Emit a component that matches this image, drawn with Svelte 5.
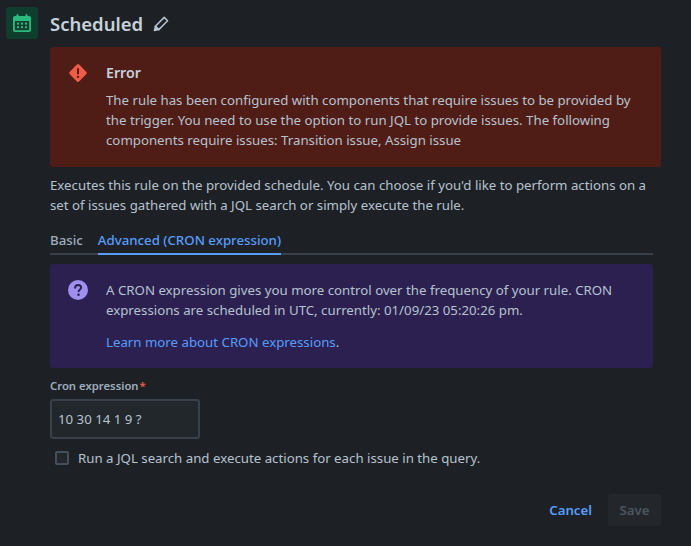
<script>
  const components = 'Transition issue, Assign issue';
</script>

<div class="page">
  <header class="head">
    <div class="tile">
      <svg width="20" height="20" viewBox="0 0 20 20" fill="none">
        <rect x="1" y="3" width="18" height="16" rx="2" fill="#2abb7f"/>
        <rect x="2.8" y="8" width="14.4" height="9.2" rx="0.5" fill="#123f2f"/>
        <rect x="4.5" y="1" width="2" height="4" rx="1" fill="#2abb7f"/>
        <rect x="13.5" y="1" width="2" height="4" rx="1" fill="#2abb7f"/>
        <g fill="#2abb7f">
          <rect x="5" y="9.6" width="2" height="2"/><rect x="9" y="9.6" width="2" height="2"/><rect x="13" y="9.6" width="2" height="2"/>
          <rect x="5" y="13.2" width="2" height="2"/><rect x="9" y="13.2" width="2" height="2"/><rect x="13" y="13.2" width="2" height="2"/>
        </g>
      </svg>
    </div>
    <h1>Scheduled</h1>
    <svg class="pencil" width="18" height="18" viewBox="0 0 18 18" fill="none" stroke="#b6c2cf" stroke-width="1.5" stroke-linejoin="round">
      <path d="M12.2 2.4l3.4 3.4-8.8 8.8-3.4-3.4z"/>
      <path d="M3.4 11.2l-1 4.4 4.4-1z" fill="#b6c2cf"/>
    </svg>
  </header>

  <div class="body">
    <section class="flag error">
      <svg class="ficon" width="20" height="20" viewBox="0 0 20 20">
        <path d="M8.9 1.6a1.6 1.6 0 0 1 2.2 0l7.3 7.3a1.6 1.6 0 0 1 0 2.2l-7.3 7.3a1.6 1.6 0 0 1-2.2 0l-7.3-7.3a1.6 1.6 0 0 1 0-2.2z" fill="#ef5c48"/>
        <rect x="9" y="5" width="2" height="6.4" rx="1" fill="#4f1c16"/>
        <circle cx="10" cy="13.9" r="1.15" fill="#4f1c16"/>
      </svg>
      <div class="ftext">
        <h2>Error</h2>
        <p>The rule has been configured with components that require issues to be provided by the trigger. You need to use the option to run JQL to provide issues. The following components require issues: {components}</p>
      </div>
    </section>

    <p class="desc">Executes this rule on the provided schedule. You can choose if you'd like to perform actions on a set of issues gathered with a JQL search or simply execute the rule.</p>

    <nav class="tabs">
      <span class="tab">Basic</span>
      <span class="tab active">Advanced (CRON expression)</span>
    </nav>

    <section class="flag info">
      <svg class="ficon" width="20" height="20" viewBox="0 0 20 20">
        <circle cx="10" cy="10" r="10" fill="#9f8fef"/>
        <path d="M7.1 7.8c0-1.7 1.3-2.8 3-2.8s3 1 3 2.6c0 1.3-.8 1.9-1.6 2.4-.6.4-.9.7-.9 1.3" fill="none" stroke="#2b2050" stroke-width="2" stroke-linecap="round"/>
        <circle cx="10.5" cy="14.7" r="1.25" fill="#2b2050"/>
      </svg>
      <div class="ftext">
        <p>A CRON expression gives you more control over the frequency of your rule. CRON expressions are scheduled in UTC, currently: 01/09/23 05:20:26 pm.</p>
        <p class="more"><a href="#top">Learn more about CRON expressions</a>.</p>
      </div>
    </section>

    <div class="field">
      <span class="label">Cron expression<span class="req">*</span></span>
      <div class="input">10 30 14 1 9 ?</div>
    </div>

    <label class="check">
      <span class="box"></span>
      <span>Run a JQL search and execute actions for each issue in the query.</span>
    </label>

    <footer class="actions">
      <span class="cancel">Cancel</span>
      <span class="save">Save</span>
    </footer>
  </div>
</div>

<style>
  :global(body) {
    margin: 0;
    background: #1d2125;
  }
  .page {
    width: 691px;
    height: 546px;
    overflow: hidden;
    box-sizing: border-box;
    padding-top: 7px;
    font-family: "Noto Sans", "Open Sans", sans-serif;
    font-size: 13.25px;
    line-height: 20px;
    color: #b6c2cf;
  }
  .head {
    display: flex;
    align-items: center;
    padding-left: 6px;
    height: 32px;
  }
  .tile {
    width: 32px;
    height: 32px;
    background: #0f3d2e;
    border-radius: 3px;
    display: flex;
    align-items: center;
    justify-content: center;
  }
  h1 {
    margin: 0 0 0 12px;
    padding-top: 2px;
    font-size: 18.5px;
    font-weight: 600;
    line-height: 30px;
    color: #c7d1db;
  }
  .pencil {
    margin: 2px 0 0 9px;
  }
  .body {
    margin-left: 50px;
    width: 611px;
  }
  .flag {
    display: flex;
    gap: 18px;
    box-sizing: border-box;
    border-radius: 3px;
    padding: 16px 18px;
  }
  .ficon {
    flex: none;
  }
  .error {
    margin-top: 8px;
    height: 120px;
    background: #501d16;
  }
  .ftext {
    flex: 1;
  }
  h2 {
    margin: 0 0 7px;
    font-size: 14.2px;
    font-weight: 600;
    line-height: 20px;
    color: #c7d1db;
  }
  p {
    margin: 0;
  }
  .flag p {
    color: #b6c2cf;
  }
  .desc {
    margin-top: 8px;
    width: 605px;
  }
  .tabs {
    display: flex;
    gap: 15px;
    margin-top: 15px;
    width: 603px;
    height: 25px;
    box-sizing: border-box;
    border-bottom: 2px solid #38414a;
    font-weight: 500;
  }
  .tab {
    height: 25px;
    box-sizing: border-box;
    color: #9fadbc;
  }
  .active {
    color: #579dff;
    border-bottom: 2px solid #579dff;
  }
  .info {
    margin-top: 9px;
    width: 603px;
    height: 104px;
    background: #2b2050;
  }
  .more {
    margin-top: 12px;
  }
  a {
    color: #579dff;
    text-decoration: none;
  }
  .field {
    margin-top: 10px;
  }
  .label {
    display: block;
    font-size: 11.3px;
    font-weight: 600;
    line-height: 16px;
    color: #9fadbc;
  }
  .req {
    margin-left: 1px;
    color: #ef5c48;
  }
  .input {
    margin-top: 5px;
    box-sizing: border-box;
    width: 150px;
    height: 40px;
    border: 2px solid #38414a;
    border-radius: 3px;
    background: #22272b;
    padding: 8px 6px;
    color: #b6c2cf;
  }
  .check {
    display: flex;
    align-items: center;
    gap: 9px;
    margin-top: 9px;
    padding-left: 5px;
  }
  .box {
    width: 10px;
    height: 10px;
    border: 2px solid #454f59;
    border-radius: 2px;
    background: #22272b;
  }
  .actions {
    display: flex;
    justify-content: flex-end;
    align-items: center;
    gap: 16px;
    margin-top: 26px;
    font-weight: 600;
  }
  .cancel {
    color: #579dff;
  }
  .save {
    width: 53px;
    height: 32px;
    line-height: 32px;
    text-align: center;
    border-radius: 3px;
    background: #23272b;
    color: #4b555e;
  }
</style>
